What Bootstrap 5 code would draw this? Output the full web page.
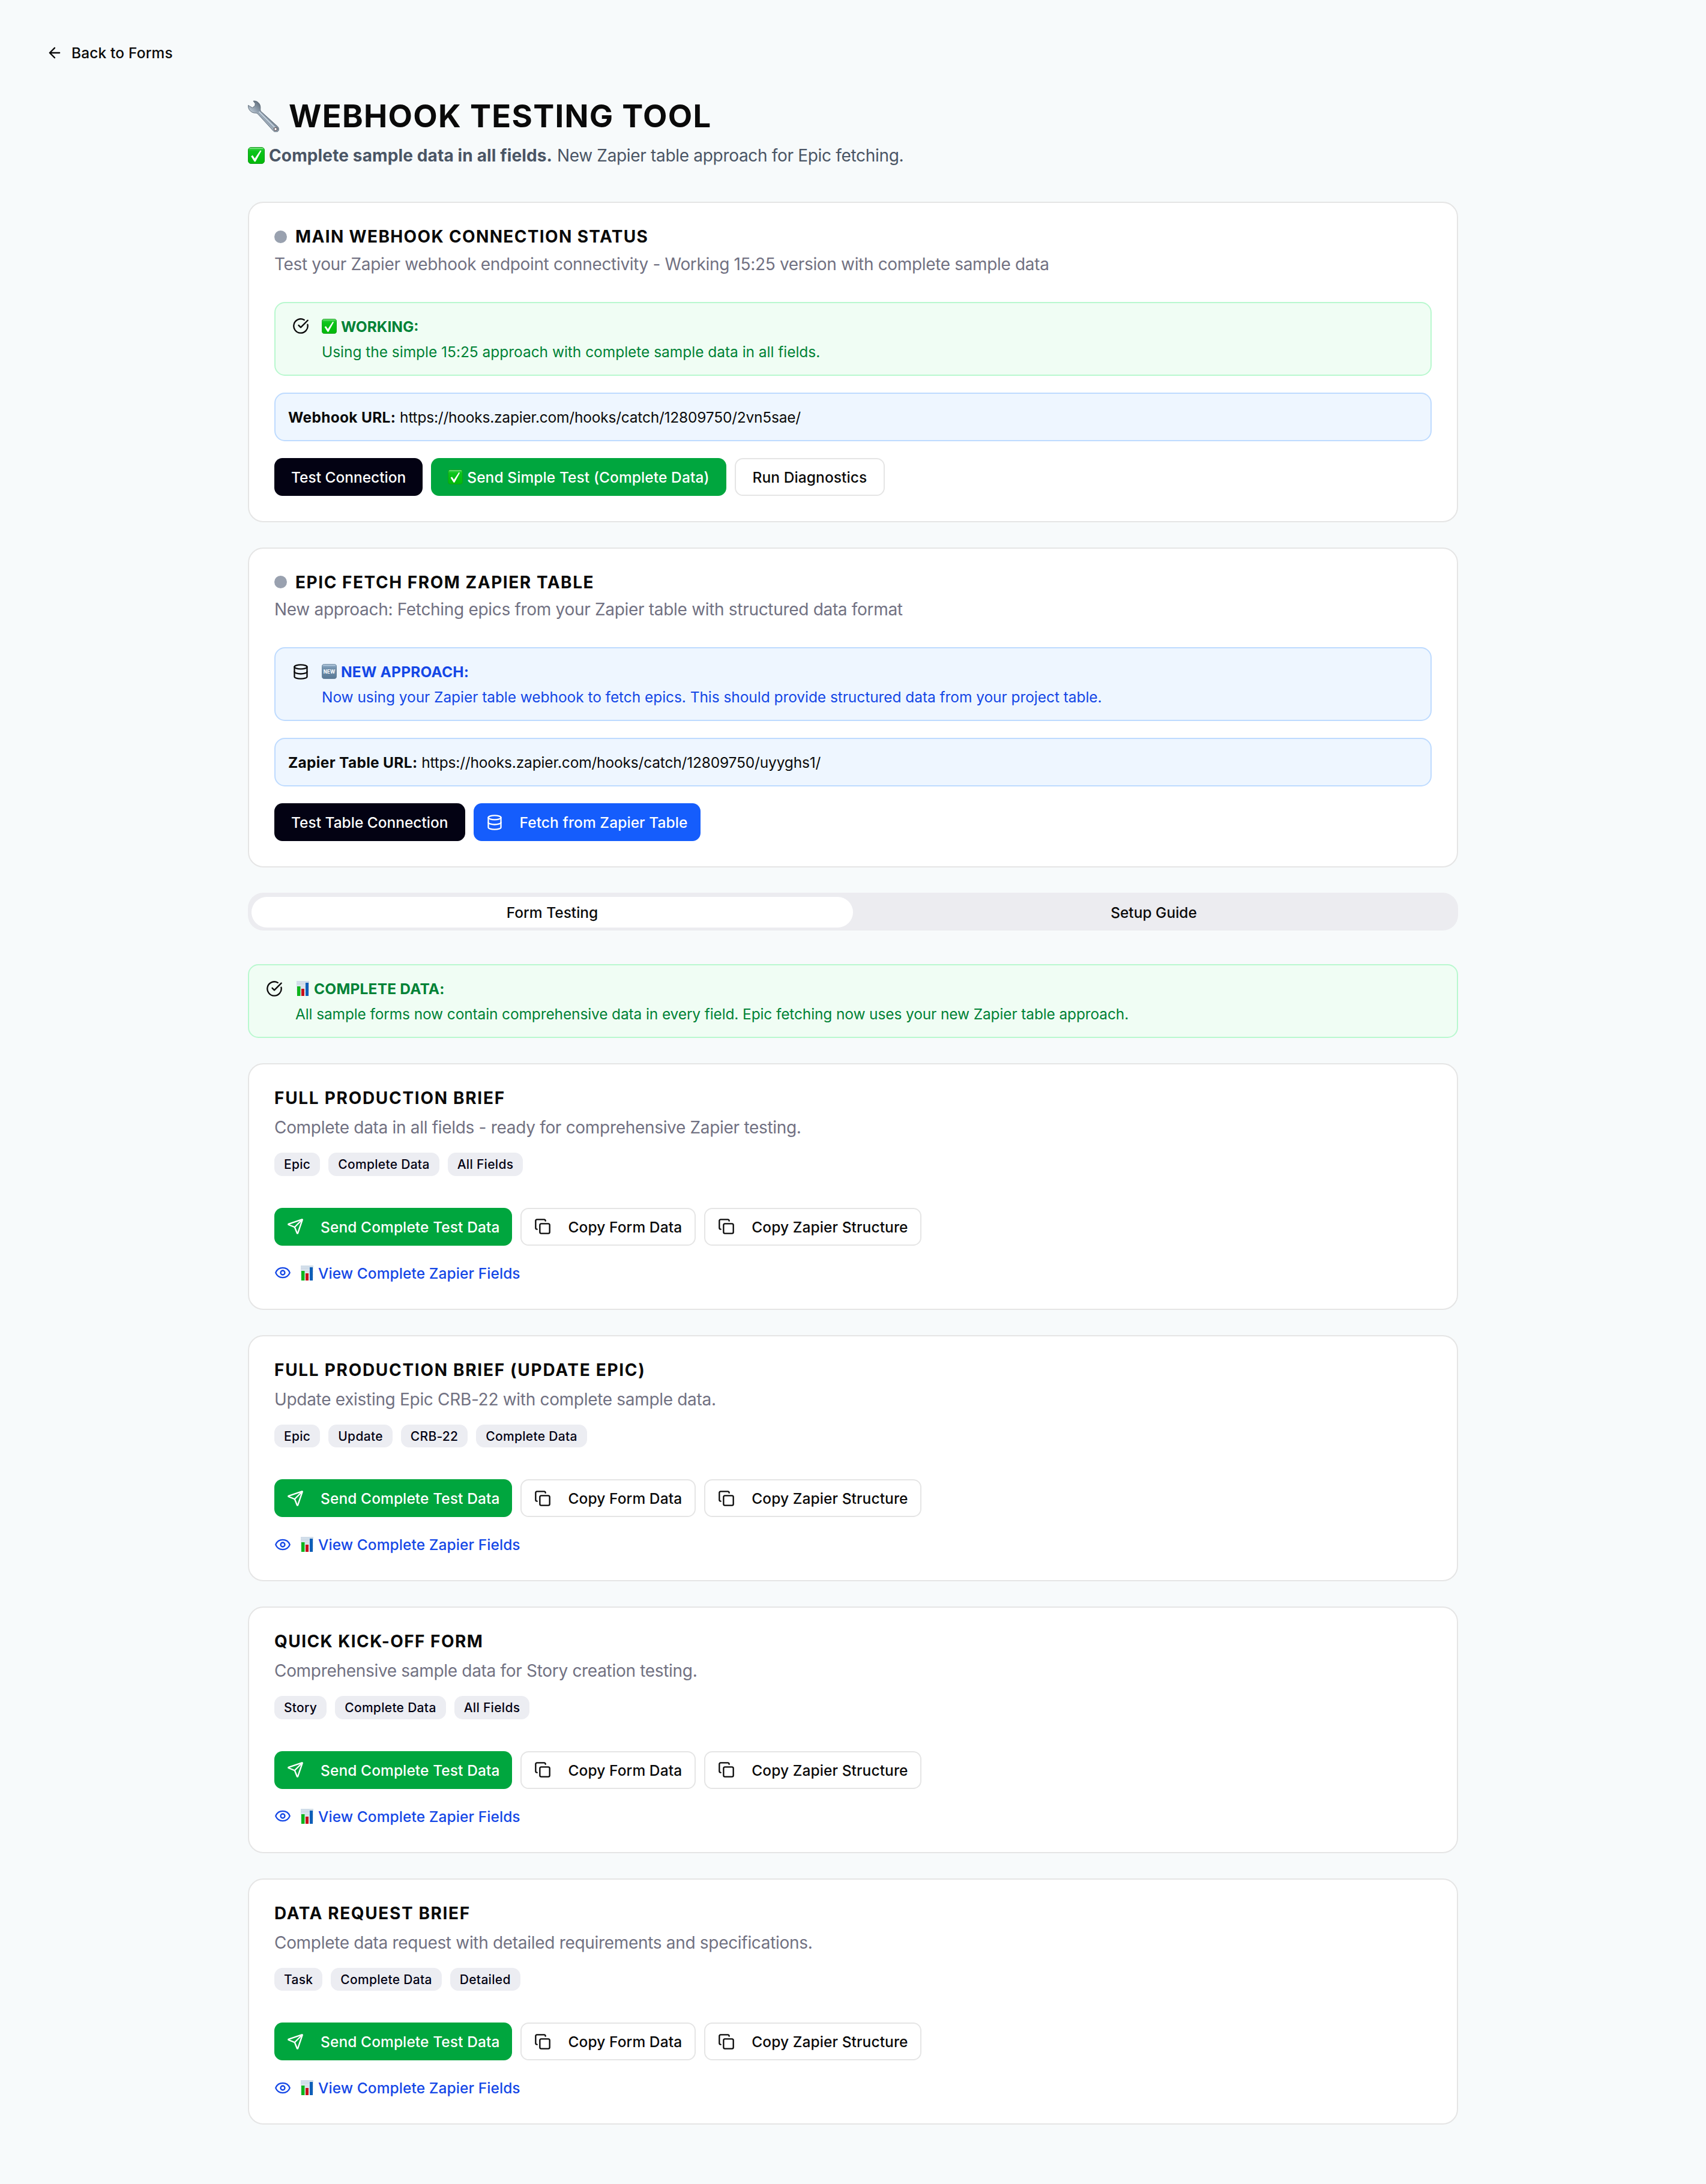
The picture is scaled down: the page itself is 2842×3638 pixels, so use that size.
<!DOCTYPE html>
<html lang="en">
<head>
<meta charset="utf-8">
<meta name="viewport" content="width=device-width, initial-scale=1">
<title>Webhook Testing Tool</title>
<link href="https://cdn.jsdelivr.net/npm/bootstrap@5.3.0/dist/css/bootstrap.min.css" rel="stylesheet">
<style>
:root{--ink:#0a0a0a;--muted:#717182;--line:#e5e5e5}
body{background:#f7fafb;color:var(--ink);font-family:Inter,"Liberation Sans",sans-serif;font-size:24.5px;line-height:35px}
svg{flex:none;display:block}
.page{padding:56px 56px 99px}
.back-link{height:63px;padding:2px 21px 0;gap:14px;font-weight:500;letter-spacing:.15px;color:var(--ink);text-decoration:none}
.wrap{width:2016px;margin:41px auto 0}
.tool-title{font-size:52.5px;line-height:66px;font-weight:700;letter-spacing:1.31px}
.tool-sub{font-size:28px;line-height:42px;margin:12px 0 56px;color:#4a5565}
.sub-strong{letter-spacing:.13px}
.sub-rest{letter-spacing:-.32px}
.stack{gap:42px}
.panel{background:#fff;border:2px solid var(--line);border-radius:25.5px;padding:42px}
.panel-title{font-size:28px;line-height:28px;font-weight:700;letter-spacing:1.7px;gap:14px}
.title-main{letter-spacing:1.36px}
.title-epic{letter-spacing:1.54px}
.title-quick{letter-spacing:1.44px}
.title-data{letter-spacing:1.61px}
.panel-desc{font-size:28px;line-height:42px;color:var(--muted);letter-spacing:-.31px}
.desc-main{letter-spacing:-.34px}
.gap-a{margin-top:10.5px}
.gap-b{margin-top:14px}
.dot{width:21px;height:21px;border-radius:50%;background:#99a1af}
.note{border:2px solid;border-radius:17.5px;padding:21px 28px;gap:21px;height:123px}
.note .ic{margin-top:3.5px;color:var(--ink)}
.note-head{font-weight:700;height:35px;padding-top:2px;margin-bottom:8px}
.note-text{letter-spacing:-.03px}
.note-blue .note-head,.note-data .note-head{letter-spacing:.2px}
.note-blue .note-text{letter-spacing:-.06px}
.note-data .note-text{letter-spacing:-.13px}
.note-green{background:#f0fdf4;border-color:#b9f8cf;color:#008236}
.note-blue{background:#eef6ff;border-color:#bedbff;color:#1447e6}
.urlbox{background:#eef6ff;border:2px solid #bedbff;border-radius:17.5px;padding:22px 21px 20px;margin:28px 0}
.urlbox strong{font-weight:700;letter-spacing:.3px}
.url{letter-spacing:-.21px}
.url-table{letter-spacing:-.17px}
.in-panel{margin-top:42px}
.rowgap{gap:14px}
.act{height:63px;padding:2px 28px 0;border:0;border-radius:13.5px;font-size:24.5px;line-height:35px;font-weight:500;letter-spacing:.09px;display:inline-flex;align-items:center}
.act.has-ic{padding:2px 21px 0;gap:28px}
.act svg,.back-link svg,.note-head svg,.view-link svg{margin-top:-2px}
.act-dark{background:#030213;color:#fff;letter-spacing:-.01px}
.act-green{background:#00a63e;color:#fff}
.act-blue{background:#155dfc;color:#fff}
.act-line{background:#fff;color:var(--ink);border:2px solid var(--line)}
.tabbar{height:63px;background:#ececf0;border-radius:25.5px;padding:7px 6px 5px;margin-bottom:14px}
.tabbar .nav-link{color:var(--ink);border-radius:25.5px;padding:0;height:51px;line-height:52px;font-weight:500}
.tabbar .nav-link.active{background:#fff;color:var(--ink)}
.tag{font-size:21px;line-height:28px;font-weight:500;letter-spacing:.3px;padding:6.25px 16px 4.25px;border-radius:13.5px;background:#ecedf2;color:#030213}
.tags{margin:21px 0 53px}
.view-link{margin-top:28px;height:35px;padding-top:2px;letter-spacing:.08px;color:#1447e6;font-weight:500;text-decoration:none;width:max-content}
.e-check{margin-right:7px}
.e-chart{margin:0 8px 0 2px}
.view-link .e-chart{margin-left:16px}
</style>
<script src="https://cdn.jsdelivr.net/npm/bootstrap@5.3.0/dist/js/bootstrap.bundle.min.js"></script>
</head>
<body>
<svg width="0" height="0" class="position-absolute" aria-hidden="true">
  <defs>
    <linearGradient id="gCheck" x1="0" y1="0" x2="0" y2="1"><stop offset="0" stop-color="#3fd34a"/><stop offset=".25" stop-color="#0cc41a"/><stop offset="1" stop-color="#02b90a"/></linearGradient>
    <linearGradient id="gNew" x1="0" y1="0" x2="0" y2="1"><stop offset="0" stop-color="#9fbad2"/><stop offset=".25" stop-color="#7594b0"/><stop offset="1" stop-color="#587894"/></linearGradient>
    <linearGradient id="gSteel" x1="0" y1="1" x2="1" y2="0"><stop offset=".3" stop-color="#d3dde6"/><stop offset=".5" stop-color="#8d9cab"/><stop offset=".7" stop-color="#53606c"/></linearGradient>
    <linearGradient id="gSky" x1="0" y1="0" x2="0" y2="1"><stop offset="0" stop-color="#cfdce8"/><stop offset="1" stop-color="#eef3f7"/></linearGradient>
  </defs>
  <symbol id="arrow" viewBox="0 0 24 24"><path d="m12 19-7-7 7-7M19 12H5"/></symbol>
  <symbol id="circle-check" viewBox="0 0 24 24"><path d="M21.801 10A10 10 0 1 1 17 3.335"/><path d="m9 11 3 3L22 4"/></symbol>
  <symbol id="database" viewBox="0 0 24 24"><ellipse cx="12" cy="5" rx="9" ry="3"/><path d="M3 5V19A9 3 0 0 0 21 19V5"/><path d="M3 12A9 3 0 0 0 21 12"/></symbol>
  <symbol id="send" viewBox="0 0 24 24"><path d="M14.536 21.686a.5.5 0 0 0 .937-.024l6.5-19a.496.496 0 0 0-.635-.635l-19 6.5a.5.5 0 0 0-.024.937l7.93 3.18a2 2 0 0 1 1.112 1.11z"/><path d="m21.854 2.147-10.94 10.939"/></symbol>
  <symbol id="copy" viewBox="0 0 24 24"><rect width="14" height="14" x="8" y="8" rx="2"/><path d="M4 16c-1.1 0-2-.9-2-2V4c0-1.1.9-2 2-2h10c1.1 0 2 .9 2 2"/></symbol>
  <symbol id="eye" viewBox="0 0 24 24"><path d="M2.062 12.348a1 1 0 0 1 0-.696 10.75 10.75 0 0 1 19.876 0 1 1 0 0 1 0 .696 10.75 10.75 0 0 1-19.876 0"/><circle cx="12" cy="12" r="3"/></symbol>
  <symbol id="check" viewBox="0 0 28 28"><rect x=".5" y=".5" width="27" height="27" rx="4.5" fill="url(#gCheck)" stroke="#149a1c"/><path d="M3 2.2h22" stroke="#8be890" stroke-width="1.2" stroke-linecap="round"/><path d="M5.2 15.5 7.8 13.6 11.4 19 20.6 5.4 22.4 6.4 12.6 24.3h-1.8z" fill="#fff"/></symbol>
  <symbol id="chart" viewBox="0 0 21 25"><path fill="url(#gSky)" d="M0 0h21v25H0z"/><path d="M0 5h21M0 10h21M0 15h21M0 20h21" stroke="#bccbd8" stroke-width=".5"/><path fill="#0db51b" d="M1 9h5.5v16H1z"/><path fill="#c8101c" d="M8 13h5v12H8z"/><path fill="#0f5fb8" d="M15 3h5v22h-5z"/></symbol>
  <symbol id="wrench" viewBox="0 0 52 53"><path d="M9 1.2C15 .4 20.500 5 20.800 11.500 20.900 14.500 20.200 16.500 21.400 18.200L49.500 43.800C52.500 47 51.800 50.500 49.600 52 47 53.600 43.500 52.800 41.600 50.200L16.300 22.600C14.500 20.800 12.500 21.500 10 21 4.500 20 .2 15.200.5 8.400L7.400 12.500 11.800 9.200 12.200 5.600z" fill="url(#gSteel)" stroke="#566370" stroke-width=".9" stroke-linejoin="round"/><path d="M19 19.500 45.500 46" stroke="#c5d2de" stroke-width="2" stroke-linecap="round"/><circle cx="46" cy="48" r="2.500" fill="#f7fafc" stroke="#5a4a4e" stroke-width="1.100"/></symbol>
</svg>

<div class="page">
  <a href="#" class="back-link d-inline-flex align-items-center"><svg width="28" height="28" fill="none" stroke="currentColor" stroke-width="2" stroke-linecap="round" stroke-linejoin="round"><use href="#arrow"/></svg>Back to Forms</a>

  <main class="wrap">
    <h1 class="tool-title d-flex align-items-center m-0"><svg width="52" height="53" class="me-3"><use href="#wrench"/></svg>WEBHOOK TESTING TOOL</h1>
    <p class="tool-sub d-flex align-items-center"><svg width="28" height="28" class="e-check"><use href="#check"/></svg><span><strong class="sub-strong">Complete sample data in all fields.</strong> <span class="sub-rest">New Zapier table approach for Epic fetching.</span></span></p>

    <div class="stack d-flex flex-column">
      <section class="panel">
        <h2 class="panel-title title-main d-flex align-items-center m-0"><span class="dot"></span>MAIN WEBHOOK CONNECTION STATUS</h2>
        <p class="panel-desc desc-main gap-a mb-0">Test your Zapier webhook endpoint connectivity - Working 15:25 version with complete sample data</p>
        <div class="note note-green in-panel d-flex">
          <svg class="ic" width="28" height="28" fill="none" stroke="currentColor" stroke-width="2" stroke-linecap="round" stroke-linejoin="round"><use href="#circle-check"/></svg>
          <div><div class="note-head d-flex align-items-center"><svg width="25" height="25" class="e-check"><use href="#check"/></svg>WORKING:</div><div class="note-text">Using the simple 15:25 approach with complete sample data in all fields.</div></div>
        </div>
        <div class="urlbox"><strong>Webhook URL:</strong> <span class="url">https://hooks.zapier.com/hooks/catch/12809750/2vn5sae/</span></div>
        <div class="rowgap d-flex">
          <button class="btn act act-dark">Test Connection</button>
          <button class="btn act act-green"><svg width="25" height="25" class="e-check"><use href="#check"/></svg>Send Simple Test (Complete Data)</button>
          <button class="btn act act-line">Run Diagnostics</button>
        </div>
      </section>

      <section class="panel">
        <h2 class="panel-title title-epic d-flex align-items-center m-0"><span class="dot"></span>EPIC FETCH FROM ZAPIER TABLE</h2>
        <p class="panel-desc gap-a mb-0">New approach: Fetching epics from your Zapier table with structured data format</p>
        <div class="note note-blue in-panel d-flex">
          <svg class="ic" width="28" height="28" fill="none" stroke="currentColor" stroke-width="2" stroke-linecap="round" stroke-linejoin="round"><use href="#database"/></svg>
          <div><div class="note-head d-flex align-items-center"><svg width="25" height="25" viewBox="0 0 28 28" class="e-check"><rect x=".5" y=".5" width="27" height="27" rx="4.5" fill="url(#gNew)" stroke="#5d7a94"/><path d="M3 2.2h22" stroke="#c6d8e7" stroke-width="1.2" stroke-linecap="round"/><text x="14" y="18" text-anchor="middle" font-weight="700" font-size="10" textLength="22" lengthAdjust="spacingAndGlyphs" fill="#fff">NEW</text></svg>NEW APPROACH:</div><div class="note-text">Now using your Zapier table webhook to fetch epics. This should provide structured data from your project table.</div></div>
        </div>
        <div class="urlbox"><strong>Zapier Table URL:</strong> <span class="url url-table">https://hooks.zapier.com/hooks/catch/12809750/uyyghs1/</span></div>
        <div class="rowgap d-flex">
          <button class="btn act act-dark">Test Table Connection</button>
          <button class="btn act act-blue has-ic"><svg width="28" height="28" fill="none" stroke="currentColor" stroke-width="2" stroke-linecap="round" stroke-linejoin="round"><use href="#database"/></svg>Fetch from Zapier Table</button>
        </div>
      </section>

      <ul class="tabbar nav nav-pills nav-justified flex-nowrap">
        <li class="nav-item"><a class="nav-link active" href="#">Form Testing</a></li>
        <li class="nav-item"><a class="nav-link" href="#">Setup Guide</a></li>
      </ul>

      <div class="note note-green note-data d-flex">
        <svg class="ic" width="28" height="28" fill="none" stroke="currentColor" stroke-width="2" stroke-linecap="round" stroke-linejoin="round"><use href="#circle-check"/></svg>
        <div><div class="note-head d-flex align-items-center"><svg width="21" height="25" class="e-chart"><use href="#chart"/></svg>COMPLETE DATA:</div><div class="note-text">All sample forms now contain comprehensive data in every field. Epic fetching now uses your new Zapier table approach.</div></div>
      </div>

      <section class="panel">
        <h2 class="panel-title m-0">FULL PRODUCTION BRIEF</h2>
        <p class="panel-desc gap-b mb-0">Complete data in all fields - ready for comprehensive Zapier testing.</p>
        <div class="tags rowgap d-flex"><span class="tag">Epic</span><span class="tag">Complete Data</span><span class="tag">All Fields</span></div>
        <div class="rowgap d-flex">
          <button class="btn act act-green has-ic"><svg width="28" height="28" fill="none" stroke="currentColor" stroke-width="2" stroke-linecap="round" stroke-linejoin="round"><use href="#send"/></svg>Send Complete Test Data</button>
          <button class="btn act act-line has-ic"><svg width="28" height="28" fill="none" stroke="currentColor" stroke-width="2" stroke-linecap="round" stroke-linejoin="round"><use href="#copy"/></svg>Copy Form Data</button>
          <button class="btn act act-line has-ic"><svg width="28" height="28" fill="none" stroke="currentColor" stroke-width="2" stroke-linecap="round" stroke-linejoin="round"><use href="#copy"/></svg>Copy Zapier Structure</button>
        </div>
        <a href="#" class="view-link d-flex align-items-center"><svg width="28" height="28" fill="none" stroke="currentColor" stroke-width="2" stroke-linecap="round" stroke-linejoin="round"><use href="#eye"/></svg><svg width="21" height="25" class="e-chart"><use href="#chart"/></svg>View Complete Zapier Fields</a>
      </section>

      <section class="panel">
        <h2 class="panel-title m-0">FULL PRODUCTION BRIEF (UPDATE EPIC)</h2>
        <p class="panel-desc gap-b mb-0">Update existing Epic CRB-22 with complete sample data.</p>
        <div class="tags rowgap d-flex"><span class="tag">Epic</span><span class="tag">Update</span><span class="tag">CRB-22</span><span class="tag">Complete Data</span></div>
        <div class="rowgap d-flex">
          <button class="btn act act-green has-ic"><svg width="28" height="28" fill="none" stroke="currentColor" stroke-width="2" stroke-linecap="round" stroke-linejoin="round"><use href="#send"/></svg>Send Complete Test Data</button>
          <button class="btn act act-line has-ic"><svg width="28" height="28" fill="none" stroke="currentColor" stroke-width="2" stroke-linecap="round" stroke-linejoin="round"><use href="#copy"/></svg>Copy Form Data</button>
          <button class="btn act act-line has-ic"><svg width="28" height="28" fill="none" stroke="currentColor" stroke-width="2" stroke-linecap="round" stroke-linejoin="round"><use href="#copy"/></svg>Copy Zapier Structure</button>
        </div>
        <a href="#" class="view-link d-flex align-items-center"><svg width="28" height="28" fill="none" stroke="currentColor" stroke-width="2" stroke-linecap="round" stroke-linejoin="round"><use href="#eye"/></svg><svg width="21" height="25" class="e-chart"><use href="#chart"/></svg>View Complete Zapier Fields</a>
      </section>

      <section class="panel">
        <h2 class="panel-title title-quick m-0">QUICK KICK-OFF FORM</h2>
        <p class="panel-desc gap-b mb-0">Comprehensive sample data for Story creation testing.</p>
        <div class="tags rowgap d-flex"><span class="tag">Story</span><span class="tag">Complete Data</span><span class="tag">All Fields</span></div>
        <div class="rowgap d-flex">
          <button class="btn act act-green has-ic"><svg width="28" height="28" fill="none" stroke="currentColor" stroke-width="2" stroke-linecap="round" stroke-linejoin="round"><use href="#send"/></svg>Send Complete Test Data</button>
          <button class="btn act act-line has-ic"><svg width="28" height="28" fill="none" stroke="currentColor" stroke-width="2" stroke-linecap="round" stroke-linejoin="round"><use href="#copy"/></svg>Copy Form Data</button>
          <button class="btn act act-line has-ic"><svg width="28" height="28" fill="none" stroke="currentColor" stroke-width="2" stroke-linecap="round" stroke-linejoin="round"><use href="#copy"/></svg>Copy Zapier Structure</button>
        </div>
        <a href="#" class="view-link d-flex align-items-center"><svg width="28" height="28" fill="none" stroke="currentColor" stroke-width="2" stroke-linecap="round" stroke-linejoin="round"><use href="#eye"/></svg><svg width="21" height="25" class="e-chart"><use href="#chart"/></svg>View Complete Zapier Fields</a>
      </section>

      <section class="panel">
        <h2 class="panel-title title-data m-0">DATA REQUEST BRIEF</h2>
        <p class="panel-desc gap-b mb-0">Complete data request with detailed requirements and specifications.</p>
        <div class="tags rowgap d-flex"><span class="tag">Task</span><span class="tag">Complete Data</span><span class="tag">Detailed</span></div>
        <div class="rowgap d-flex">
          <button class="btn act act-green has-ic"><svg width="28" height="28" fill="none" stroke="currentColor" stroke-width="2" stroke-linecap="round" stroke-linejoin="round"><use href="#send"/></svg>Send Complete Test Data</button>
          <button class="btn act act-line has-ic"><svg width="28" height="28" fill="none" stroke="currentColor" stroke-width="2" stroke-linecap="round" stroke-linejoin="round"><use href="#copy"/></svg>Copy Form Data</button>
          <button class="btn act act-line has-ic"><svg width="28" height="28" fill="none" stroke="currentColor" stroke-width="2" stroke-linecap="round" stroke-linejoin="round"><use href="#copy"/></svg>Copy Zapier Structure</button>
        </div>
        <a href="#" class="view-link d-flex align-items-center"><svg width="28" height="28" fill="none" stroke="currentColor" stroke-width="2" stroke-linecap="round" stroke-linejoin="round"><use href="#eye"/></svg><svg width="21" height="25" class="e-chart"><use href="#chart"/></svg>View Complete Zapier Fields</a>
      </section>
    </div>
  </main>
</div>
</body>
</html>
